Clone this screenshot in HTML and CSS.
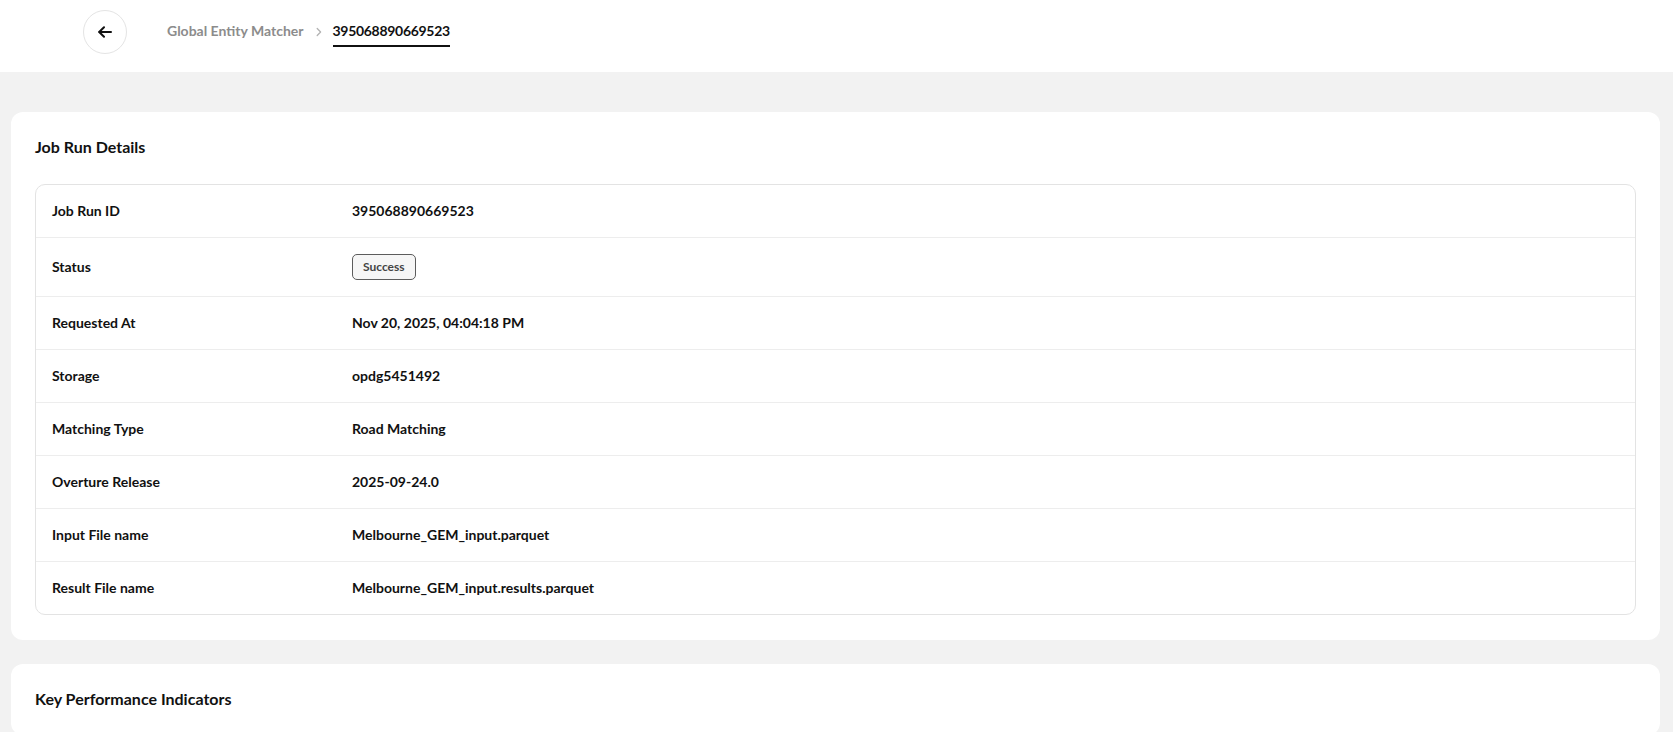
FILE: index.html
```html
<!DOCTYPE html>
<html lang="en">
<head>
    <meta charset="UTF-8">
    <meta name="viewport" content="width=device-width, initial-scale=1.0">
    <title>Job Run 395068890669523</title>
    <link rel="stylesheet" href="styles.css">
</head>
<body>
    <header class="top-bar">
        <button class="back-btn" type="button" aria-label="Back">
            <svg width="14" height="12" viewBox="0 0 14 12" fill="none" stroke="#111" stroke-width="2" stroke-linecap="round" stroke-linejoin="round">
                <path d="M13 6H1.5"/>
                <path d="M6 1.2L1.2 6L6 10.8"/>
            </svg>
        </button>
        <nav class="breadcrumb">
            <a href="#" class="crumb">Global Entity Matcher</a>
            <svg class="crumb-sep" width="6" height="10" viewBox="0 0 6 10" fill="none" stroke="#b3b3b3" stroke-width="1.3" stroke-linecap="round" stroke-linejoin="round">
                <path d="M1.2 1.5L4.6 5L1.2 8.5"/>
            </svg>
            <span class="crumb crumb-active">395068890669523</span>
        </nav>
    </header>

    <main class="content">
        <section class="card">
            <h2 class="card-title">Job Run Details</h2>
            <div class="details">
                <div class="details-row">
                    <div class="details-label">Job Run ID</div>
                    <div class="details-value">395068890669523</div>
                </div>
                <div class="details-row">
                    <div class="details-label">Status</div>
                    <div class="details-value"><span class="badge">Success</span></div>
                </div>
                <div class="details-row">
                    <div class="details-label">Requested At</div>
                    <div class="details-value">Nov 20, 2025, 04:04:18 PM</div>
                </div>
                <div class="details-row">
                    <div class="details-label">Storage</div>
                    <div class="details-value">opdg5451492</div>
                </div>
                <div class="details-row">
                    <div class="details-label">Matching Type</div>
                    <div class="details-value">Road Matching</div>
                </div>
                <div class="details-row">
                    <div class="details-label">Overture Release</div>
                    <div class="details-value">2025-09-24.0</div>
                </div>
                <div class="details-row">
                    <div class="details-label">Input File name</div>
                    <div class="details-value">Melbourne_GEM_input.parquet</div>
                </div>
                <div class="details-row">
                    <div class="details-label">Result File name</div>
                    <div class="details-value">Melbourne_GEM_input.results.parquet</div>
                </div>
            </div>
        </section>

        <section class="card">
            <h2 class="card-title">Key Performance Indicators</h2>
        </section>
    </main>
</body>
</html>
```

FILE: styles.css
```css
* {
    margin: 0;
    padding: 0;
    box-sizing: border-box;
}

body {
    font-family: 'Lato', 'Noto Sans', sans-serif;
    background-color: #f2f2f2;
    color: #111;
}

.top-bar {
    height: 72px;
    background: #fff;
    display: flex;
    align-items: flex-start;
    padding: 10px 0 0 83px;
}

.back-btn {
    width: 44px;
    height: 44px;
    border-radius: 50%;
    border: 1px solid #e4e4e4;
    background: #fff;
    display: flex;
    align-items: center;
    justify-content: center;
    cursor: pointer;
}

.breadcrumb {
    display: flex;
    align-items: flex-start;
    margin: 11px 0 0 40px;
}

.crumb {
    font-size: 14px;
    line-height: 20px;
    font-weight: 700;
    color: #8c8c8c;
    text-decoration: none;
}

.crumb-sep {
    margin: 6px 11px 0 12px;
}

.crumb-active {
    color: #111;
    letter-spacing: -0.3px;
    padding-bottom: 4px;
    border-bottom: 2px solid #111;
}

.content {
    padding: 40px 13px 0 11px;
}

.card {
    background: #fff;
    border-radius: 12px;
    padding: 24px 24px 25px;
    margin-bottom: 24px;
}

.card-title {
    font-size: 16px;
    line-height: 22px;
    font-weight: 700;
    color: #111;
}

.details {
    margin-top: 26px;
    border: 1px solid #e3e3e3;
    border-radius: 10px;
}

.details-row {
    display: flex;
    align-items: center;
    border-bottom: 1px solid #ededed;
    font-size: 14px;
    line-height: 20px;
    font-weight: 700;
}

.details-row:last-child {
    border-bottom: none;
}

.details-label {
    width: 300px;
    padding: 16px;
}

.details-value {
    flex: 1;
    padding: 16px;
    display: flex;
    align-items: center;
}

.badge {
    display: inline-flex;
    align-items: center;
    height: 26px;
    padding: 0 10px;
    border: 1px solid #5c5c5c;
    border-radius: 5px;
    background: #f6f6f6;
    color: #444;
    font-size: 12px;
    font-weight: 700;
}
```
